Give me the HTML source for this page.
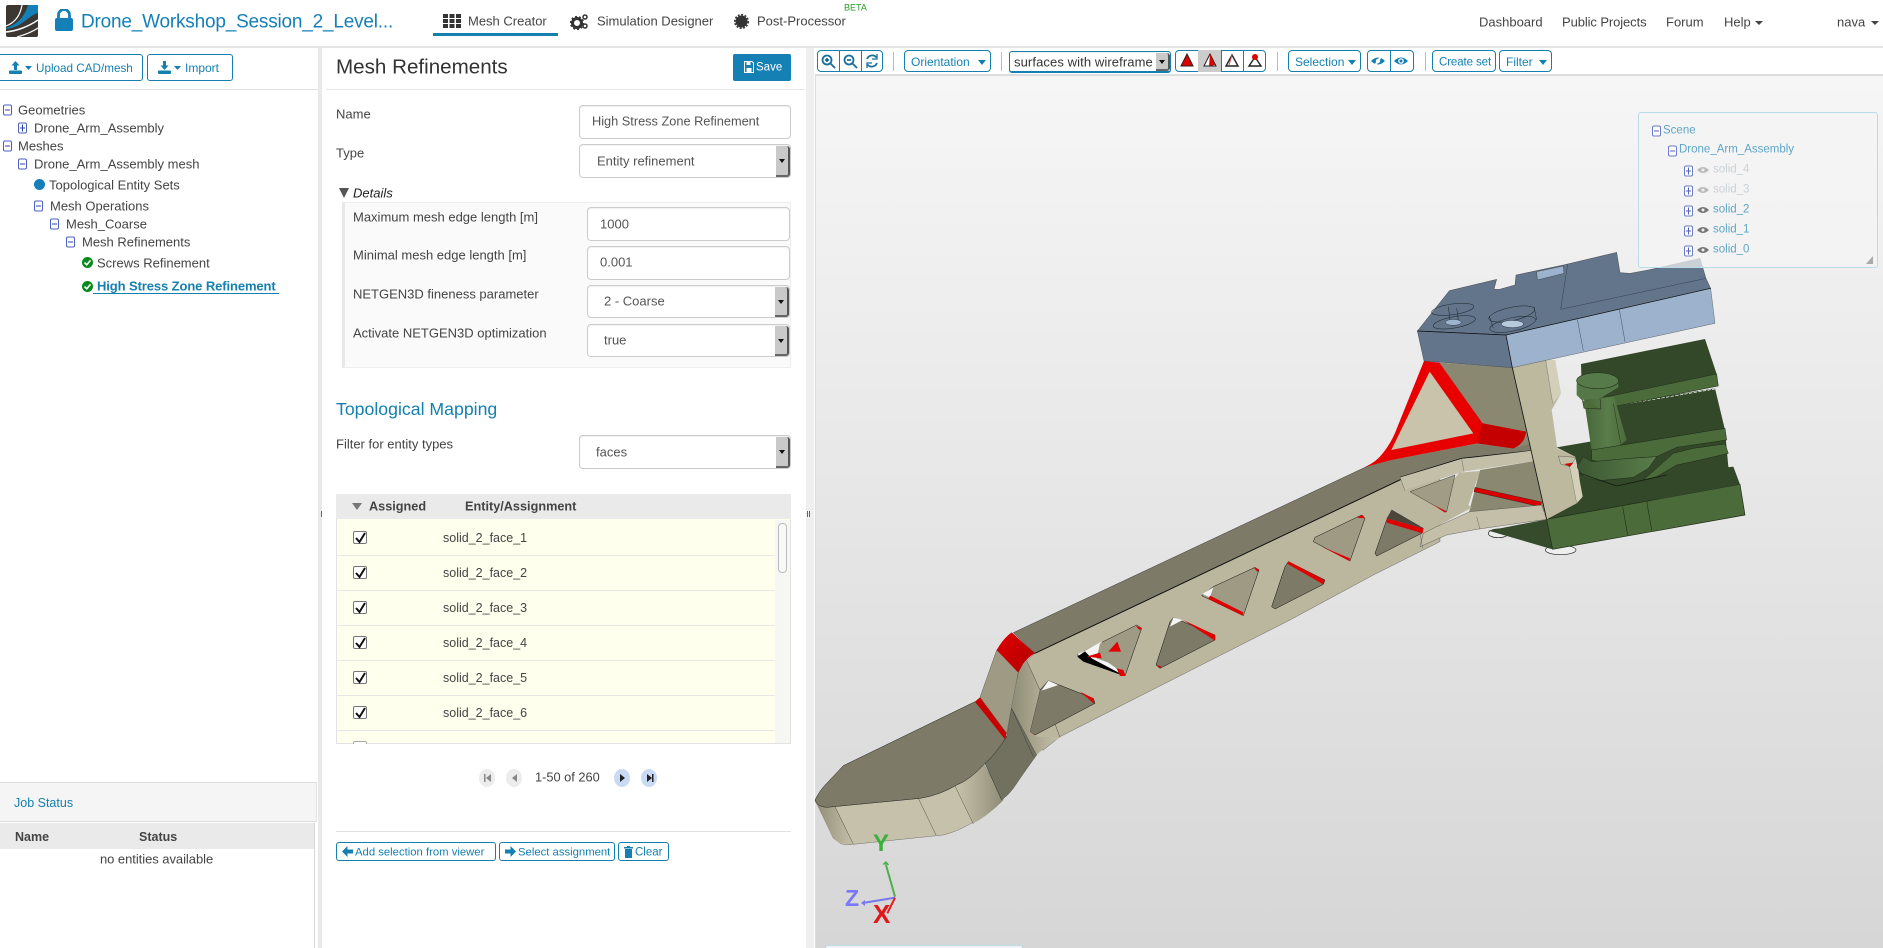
<!DOCTYPE html>
<html><head><meta charset="utf-8"><title>Mesh Creator</title>
<style>
html,body{margin:0;padding:0;width:1883px;height:948px;overflow:hidden;background:#fff;font-family:"Liberation Sans",sans-serif;color:#444;font-size:13px}
.t{position:absolute;white-space:nowrap;transform:translateY(-50%);line-height:1}
.r{position:absolute}
.b{position:absolute;box-sizing:border-box;border:1px solid #1580b0;border-radius:3px;background:#fff;color:#1580b0;font-size:12px;white-space:nowrap}
.b span{position:absolute;top:calc(50% + .5px);transform:translateY(-50%);line-height:1}
.inp{position:absolute;box-sizing:border-box;border:1px solid #ccc;border-radius:4px;background:#fff;box-shadow:inset 0 1px 1px rgba(0,0,0,.06)}
.sel:after{content:"";position:absolute;right:0;top:1px;bottom:0;width:12px;background:#c9c9c9;border-right:2px solid #555;border-bottom:2px solid #666;border-radius:0 3px 3px 0;box-sizing:content-box}
.sel:before{content:"";position:absolute;z-index:2;right:5px;top:50%;margin-top:-2px;border:3px solid transparent;border-top:4px solid #111;border-bottom:0}
.ex{position:absolute;box-sizing:border-box;width:9px;height:11px;border:1px solid #4a5fc4;border-radius:2px;background:#fff;transform:translateY(-50%)}
.ex:before{content:"";position:absolute;left:1px;right:1px;top:4px;height:1px;background:#2f3fa8}
.ex.p:after{content:"";position:absolute;top:1px;bottom:1px;left:3px;width:1px;background:#2f3fa8}
.row{position:absolute;left:337px;width:438px;background:#ffffee;border-bottom:1px solid #e6e6e6;box-sizing:border-box}
.cb{position:absolute;box-sizing:border-box;width:14px;height:13px;border:1px solid #777;border-radius:2px;background:#fff}
.pg{position:absolute;top:769px;width:16px;height:18px;border-radius:50%;background:#ececec}
.sep{position:absolute;top:52px;width:1px;height:19px;background:#bbb}
.hand{position:absolute;width:1px;height:6px;background:#666}
</style></head><body>

<!-- header -->
<div class="r" style="left:0;top:46px;width:1883px;height:2px;background:#e4e4e4"></div>
<svg class="r" style="left:6px;top:5px" width="32" height="32" viewBox="0 0 32 32">
<rect width="32" height="32" rx="2" fill="#3c3733"/>
<path d="M0 23C9 20 18 14 22 0H32V8C25 10 20 16 13 20C9 22 4 23.500 0 24Z" fill="#1580b8"/>
<path d="M0 21C8 18 14 12 16 0" stroke="#fff" stroke-width="1.200" fill="none"/>
<path d="M0 27C10 26 22 22 32 15" stroke="#fff" stroke-width="1.500" fill="none"/>
<path d="M11 32C18 30 26 27 32 23" stroke="#fff" stroke-width="1.200" fill="none"/>
</svg>
<svg class="r" style="left:55px;top:9px" width="18" height="22" viewBox="0 0 18 22"><path d="M3.500 9V6a5.500 5.500 0 0 1 11 0v3" fill="none" stroke="#1580b8" stroke-width="2.800"/><rect x="0" y="9" width="18" height="13" rx="2" fill="#1580b8"/></svg>
<div class="t" style="left:81px;top:22px;font-size:19px;color:#1580b8;letter-spacing:-.2px">Drone_Workshop_Session_2_Level...</div>

<svg class="r" style="left:443px;top:14px" width="18" height="14" viewBox="0 0 18 14" fill="#333"><rect width="5" height="4"/><rect x="6.500" width="5" height="4"/><rect x="13" width="5" height="4"/><rect y="5" width="5" height="4"/><rect x="6.500" y="5" width="5" height="4"/><rect x="13" y="5" width="5" height="4"/><rect y="10" width="5" height="4"/><rect x="6.500" y="10" width="5" height="4"/><rect x="13" y="10" width="5" height="4"/></svg>
<div class="t" style="left:468px;top:21px;font-size:13px">Mesh Creator</div>
<div class="r" style="left:433px;top:33px;width:125px;height:3px;background:#1580b0"></div>
<svg class="r" style="left:570px;top:13px" width="19" height="17" viewBox="0 0 19 17"><circle cx="7" cy="10" r="4.500" fill="none" stroke="#333" stroke-width="3"/><circle cx="7" cy="10" r="6.400" fill="none" stroke="#333" stroke-width="1.500" stroke-dasharray="2 2"/><circle cx="15" cy="4" r="2" fill="none" stroke="#333" stroke-width="1.500"/><circle cx="15" cy="13" r="2" fill="none" stroke="#333" stroke-width="1.500"/></svg>
<div class="t" style="left:597px;top:21px;font-size:13px">Simulation Designer</div>
<svg class="r" style="left:734px;top:14px" width="15" height="15" viewBox="0 0 15 15"><circle cx="7.500" cy="7.500" r="6" fill="#333"/><circle cx="7.500" cy="7.500" r="6.800" fill="none" stroke="#333" stroke-width="1.500" stroke-dasharray="2 1.500"/></svg>
<div class="t" style="left:757px;top:21px;font-size:13px">Post-Processor</div>
<div class="t" style="left:844px;top:8px;font-size:9px;color:#2a9a2a">BETA</div>
<div class="t" style="left:1479px;top:22px;font-size:13px">Dashboard</div>
<div class="t" style="left:1562px;top:22px;font-size:13px;letter-spacing:-.1px">Public Projects</div>
<div class="t" style="left:1666px;top:22px;font-size:13px">Forum</div>
<div class="t" style="left:1724px;top:22px;font-size:13px">Help</div>
<div class="r" style="left:1755px;top:21px;border:4px solid transparent;border-top:4px solid #444;border-bottom:0"></div>
<div class="t" style="left:1837px;top:22px;font-size:13px">nava</div>
<div class="r" style="left:1871px;top:21px;border:4px solid transparent;border-top:4px solid #444;border-bottom:0"></div>

<!-- splitters -->
<div class="r" style="left:318px;top:48px;width:4px;height:900px;background:#e9e9e9"></div>
<div class="r" style="left:806px;top:48px;width:8px;height:900px;background:#efefef"></div>
<div class="hand" style="left:321px;top:511px"></div>
<div class="hand" style="left:807px;top:511px"></div><div class="hand" style="left:809px;top:511px"></div>

<!-- left panel -->
<div class="b" style="left:-2px;top:54px;width:145px;height:27px"><svg style="position:absolute;left:10px;top:6px" width="13" height="13" viewBox="0 0 13 13" fill="#1580b0"><path d="M6.500 0L10.500 4.500H8V9H5V4.500H2.500Z"/><rect y="9.500" width="13" height="3.500" rx="1"/></svg><svg style="position:absolute;left:26px;top:11px" width="7" height="4" fill="#1580b0"><path d="M0 0H7L3.500 4Z"/></svg><span style="left:37px;font-size:11.700px;top:calc(50% + 1.500px)">Upload CAD/mesh</span></div>
<div class="b" style="left:147px;top:54px;width:86px;height:27px"><svg style="position:absolute;left:10px;top:6px" width="13" height="13" viewBox="0 0 13 13" fill="#1580b0"><path d="M6.500 9L10.500 4.500H8V0H5V4.500H2.500Z"/><rect y="9.500" width="13" height="3.500" rx="1"/></svg><svg style="position:absolute;left:26px;top:11px" width="7" height="4" fill="#1580b0"><path d="M0 0H7L3.500 4Z"/></svg><span style="left:37px">Import</span></div>
<div class="r" style="left:0;top:89px;width:318px;height:1px;background:#e2e2e2"></div>

<div class="ex" style="left:3px;top:110px"></div><div class="t" style="left:18px;top:110px">Geometries</div>
<div class="ex p" style="left:18px;top:128px"></div><div class="t" style="left:34px;top:128px">Drone_Arm_Assembly</div>
<div class="ex" style="left:3px;top:146px"></div><div class="t" style="left:18px;top:146px">Meshes</div>
<div class="ex" style="left:18px;top:164px"></div><div class="t" style="left:34px;top:164px">Drone_Arm_Assembly mesh</div>
<div class="r" style="left:34px;top:179px;width:11px;height:11px;border-radius:50%;background:#1580b8"></div><div class="t" style="left:49px;top:185px">Topological Entity Sets</div>
<div class="ex" style="left:34px;top:206px"></div><div class="t" style="left:50px;top:206px">Mesh Operations</div>
<div class="ex" style="left:50px;top:224px"></div><div class="t" style="left:66px;top:224px">Mesh_Coarse</div>
<div class="ex" style="left:66px;top:242px"></div><div class="t" style="left:82px;top:242px">Mesh Refinements</div>
<svg class="r" style="left:82px;top:257px" width="11" height="11" viewBox="0 0 11 11"><circle cx="5.500" cy="5.500" r="5.500" fill="#0a8a1e"/><path d="M2.500 5.500L4.700 7.800L8.500 3.400" stroke="#fff" stroke-width="1.600" fill="none"/></svg><div class="t" style="left:97px;top:263px">Screws Refinement</div>
<svg class="r" style="left:82px;top:281px" width="11" height="11" viewBox="0 0 11 11"><circle cx="5.500" cy="5.500" r="5.500" fill="#0a8a1e"/><path d="M2.500 5.500L4.700 7.800L8.500 3.400" stroke="#fff" stroke-width="1.600" fill="none"/></svg>
<div class="t" style="left:97px;top:286px;font-size:13px;font-weight:bold;color:#1580b0;letter-spacing:-.1px">High Stress Zone Refinement</div>
<div class="r" style="left:93px;top:293px;width:186px;height:1px;background:#1580b0"></div>

<!-- job status -->
<div class="r" style="left:0;top:782px;width:317px;height:40px;background:#f5f5f5;border-top:1px solid #ddd;box-sizing:border-box;border-right:1px solid #e4e4e4;border-bottom:1px solid #ddd"></div>
<div class="t" style="left:14px;top:803px;font-size:12.500px;color:#1580b0">Job Status</div>
<div class="r" style="left:0;top:823px;width:314px;height:26px;background:#eaeaea"></div>
<div class="r" style="left:314px;top:823px;width:1px;height:125px;background:#d8d8d8"></div>
<div class="t" style="left:15px;top:837px;font-weight:bold;font-size:12.500px">Name</div>
<div class="t" style="left:139px;top:837px;font-weight:bold;font-size:12.500px">Status</div>
<div class="t" style="left:100px;top:859px;font-size:13px;letter-spacing:-.05px">no entities available</div>

<!-- middle panel -->
<div class="t" style="left:336px;top:68px;font-size:20.600px;color:#333">Mesh Refinements</div>
<div class="r" style="left:733px;top:54px;width:58px;height:27px;background:#1580b4;border-radius:2px"></div>
<svg class="r" style="left:744px;top:61px" width="10" height="12" viewBox="0 0 10 12"><path d="M.5.500H8L9.500 2V11.500H.5Z" fill="none" stroke="#fff"/><rect x="2.500" y="1" width="4" height="3" fill="#fff"/><rect x="2.500" y="7" width="5" height="4" fill="#fff"/></svg>
<div class="t" style="left:756px;top:68px;color:#fff;font-size:11.500px">Save</div>
<div class="r" style="left:326px;top:89px;width:479px;height:1px;background:#e6e6e6"></div>

<div class="t" style="left:336px;top:114px">Name</div>
<div class="inp" style="left:579px;top:105px;width:212px;height:34px"></div>
<div class="t" style="left:592px;top:122px;font-size:12.800px;letter-spacing:-.02px;color:#555">High Stress Zone Refinement</div>
<div class="t" style="left:336px;top:153px">Type</div>
<div class="inp sel" style="left:579px;top:144px;width:212px;height:34px"></div>
<div class="t" style="left:597px;top:161px;font-size:13px;color:#555">Entity refinement</div>
<svg class="r" style="left:339px;top:188px" width="10" height="10"><path d="M0 0H10L5 10Z" fill="#555"/></svg>
<div class="t" style="left:353px;top:193px;font-style:italic;color:#222">Details</div>

<div class="r" style="left:342px;top:202px;width:449px;height:166px;background:#fafafa;border:1px solid #eee;border-left:3px solid #e8e8e8;box-sizing:border-box"></div>
<div class="t" style="left:353px;top:217px">Maximum mesh edge length [m]</div>
<div class="inp" style="left:587px;top:207px;width:203px;height:34px"></div>
<div class="t" style="left:600px;top:224px;color:#555">1000</div>
<div class="t" style="left:353px;top:255px">Minimal mesh edge length [m]</div>
<div class="inp" style="left:587px;top:246px;width:203px;height:34px"></div>
<div class="t" style="left:600px;top:262px;color:#555">0.001</div>
<div class="t" style="left:353px;top:294px">NETGEN3D fineness parameter</div>
<div class="inp sel" style="left:587px;top:285px;width:203px;height:33px"></div>
<div class="t" style="left:604px;top:301px;color:#555">2 - Coarse</div>
<div class="t" style="left:353px;top:333px">Activate NETGEN3D optimization</div>
<div class="inp sel" style="left:587px;top:324px;width:203px;height:33px"></div>
<div class="t" style="left:604px;top:340px;color:#555">true</div>

<div class="t" style="left:336px;top:410px;font-size:17.700px;color:#1580b0">Topological Mapping</div>
<div class="t" style="left:336px;top:444px">Filter for entity types</div>
<div class="inp sel" style="left:579px;top:435px;width:212px;height:34px"></div>
<div class="t" style="left:596px;top:452px;color:#555">faces</div>

<div class="r" style="left:336px;top:494px;width:455px;height:250px;border:1px solid #e2e2e2;box-sizing:border-box;background:#ffffee"></div>
<div class="r" style="left:336px;top:494px;width:455px;height:25px;background:#eaeaea"></div>
<svg class="r" style="left:352px;top:503px" width="10" height="7"><path d="M0 0H10L5 7Z" fill="#777"/></svg>
<div class="t" style="left:369px;top:507px;font-weight:bold;font-size:12.700px">Assigned</div>
<div class="t" style="left:465px;top:507px;font-weight:bold;font-size:12.700px">Entity/Assignment</div>

<div class="row" style="top:521px;height:35px"></div>
<div class="row" style="top:556px;height:35px"></div>
<div class="row" style="top:591px;height:35px"></div>
<div class="row" style="top:626px;height:35px"></div>
<div class="row" style="top:661px;height:35px"></div>
<div class="row" style="top:696px;height:35px"></div>
<div class="row" style="top:731px;height:12px;border-bottom:0"></div>
<div class="r" style="left:775px;top:520px;width:15px;height:223px;background:#f6f6f2"></div>
<div class="r" style="left:778px;top:523px;width:9px;height:50px;border:1px solid #bbb;border-radius:4px;box-sizing:border-box;background:#f8f8f8"></div>

<div class="cb" style="left:353px;top:531px"></div><div class="t" style="left:443px;top:538px;font-size:12.500px">solid_2_face_1</div>
<div class="cb" style="left:353px;top:566px"></div><div class="t" style="left:443px;top:573px;font-size:12.500px">solid_2_face_2</div>
<div class="cb" style="left:353px;top:601px"></div><div class="t" style="left:443px;top:608px;font-size:12.500px">solid_2_face_3</div>
<div class="cb" style="left:353px;top:636px"></div><div class="t" style="left:443px;top:643px;font-size:12.500px">solid_2_face_4</div>
<div class="cb" style="left:353px;top:671px"></div><div class="t" style="left:443px;top:678px;font-size:12.500px">solid_2_face_5</div>
<div class="cb" style="left:353px;top:706px"></div><div class="t" style="left:443px;top:713px;font-size:12.500px">solid_2_face_6</div>
<svg class="r" style="left:354px;top:529px" width="14" height="190" fill="none" stroke="#111" stroke-width="2"><path d="M2 9L5.500 13L11 4"/><path d="M2 44L5.500 48L11 39"/><path d="M2 79L5.500 83L11 74"/><path d="M2 114L5.500 118L11 109"/><path d="M2 149L5.500 153L11 144"/><path d="M2 184L5.500 188L11 179"/></svg>
<div class="r" style="left:353px;top:741px;width:14px;height:3px;border:1px solid #aaa;border-bottom:0;box-sizing:border-box;border-radius:2px 2px 0 0;background:#fff"></div>

<div class="pg" style="left:479px"></div><div class="pg" style="left:506px"></div><div class="pg" style="left:614px;background:#c9daf5"></div><div class="pg" style="left:641px;background:#c9daf5"></div>
<svg class="r" style="left:479px;top:769px" width="180" height="18" fill="#888"><path d="M5 5H6.500V13H5ZM12 5V13L7 9Z"/><path d="M38 5V13L33 9Z"/><path d="M141 5L146 9L141 13Z" fill="#222"/><path d="M168 5L173 9L168 13Z M173 5H174.500V13H173Z" fill="#222"/></svg>
<div class="t" style="left:535px;top:778px;font-size:12.800px">1-50 of 260</div>

<div class="r" style="left:336px;top:831px;width:455px;height:1px;background:#e2e2e2"></div>
<div class="b" style="left:336px;top:842px;width:160px;height:19px"><svg style="position:absolute;left:5px;top:3px" width="11" height="11" viewBox="0 0 11 11" fill="#1580b0"><path d="M0 5.500L5.500 0V3.500H11V7.500H5.500V11Z"/></svg><span style="left:18px;font-size:11.300px;top:calc(50% + 1px)">Add selection from viewer</span></div>
<div class="b" style="left:499px;top:842px;width:116px;height:19px"><svg style="position:absolute;left:5px;top:3px" width="11" height="11" viewBox="0 0 11 11" fill="#1580b0"><path d="M11 5.500L5.500 0V3.500H0V7.500H5.500V11Z"/></svg><span style="left:18px;font-size:11.300px;top:calc(50% + 1px)">Select assignment</span></div>
<div class="b" style="left:618px;top:842px;width:51px;height:19px"><svg style="position:absolute;left:5px;top:3px" width="9" height="12" viewBox="0 0 9 12" fill="#1580b0"><rect y="1" width="9" height="1.500"/><rect x="3" width="3" height="1.500"/><path d="M1 3H8V12H1Z"/></svg><span style="left:16px;font-size:11.500px;top:calc(50% + 1px)">Clear</span></div>

<!-- viewer -->
<div class="r" style="left:815px;top:74px;width:1068px;height:874px;background:linear-gradient(#f6f6f6,#d6d6d6);border-left:1px solid #ddd;border-top:2px solid #ddd;box-sizing:border-box"></div>

<svg class="r" style="left:0;top:0" width="1883" height="948" stroke-linejoin="round">
<defs>
<linearGradient id="cyl" x1="0" x2="1" y1="0" y2="0"><stop offset="0" stop-color="#466539"/><stop offset=".55" stop-color="#5a7d4a"/><stop offset="1" stop-color="#4c6b3b"/></linearGradient>
<linearGradient id="sw" x1="0" x2="1" y1="0" y2="0"><stop offset="0" stop-color="#3c5733"/><stop offset="1" stop-color="#5a7d4a"/></linearGradient>
<linearGradient id="rd" x1="0" x2="1" y1="0" y2="1"><stop offset="0" stop-color="#e00000"/><stop offset="1" stop-color="#b00000"/></linearGradient>
<linearGradient id="sh" x1="0" x2="1" y1="0" y2="0"><stop offset="0" stop-color="#8f8c76"/><stop offset=".5" stop-color="#aaa690"/><stop offset="1" stop-color="#c6c1aa"/></linearGradient>
<linearGradient id="sh2" x1="0" x2="1" y1="0" y2="0"><stop offset="0" stop-color="#c6c1aa"/><stop offset=".55" stop-color="#aaa690"/><stop offset="1" stop-color="#8f8c76"/></linearGradient>
</defs>
<!-- GREEN -->
<g transform="translate(1400,240) scale(.33333)" stroke="none">
<ellipse cx="295" cy="880" rx="30" ry="13" fill="#eee" stroke="#222" stroke-width="2"/>
<ellipse cx="482" cy="930" rx="46" ry="14" fill="#eee" stroke="#222" stroke-width="2"/>
<polygon points="470,622 570,605 640,600 975,570 985,680 1020,733 440,838 545,770 535,690 525,650" fill="#334729"/>
<polygon points="265,872 440,838 458,928" fill="#364a2c"/>
<polygon points="440,838 1020,733 1035,825 458,928" fill="#4c6b3b" stroke="#1c2a16" stroke-width="2"/>
<path d="M668 800L683 885M740 783L755 870" stroke="#22331a" stroke-width="2"/>
<polygon points="543,372 915,297 950,402 600,475 545,440" fill="#334729"/>
<polygon points="620,497 945,445 975,570 640,625" fill="#334729"/>
<path d="M660 495L945 447" stroke="#fff" stroke-width="2" stroke-dasharray="10 4"/>
<polygon points="600,475 950,402 955,438 603,507" fill="#4c6b3b" stroke="#1c2a16" stroke-width="1.500"/>
<polygon points="552,478 642,470 680,600 645,625 575,632" fill="url(#cyl)"/>
<path d="M640 490L662 610" stroke="#22331a" stroke-width="1.500"/>
<polygon points="530,430 530,465 545,480 600,475 655,442 655,420" fill="#557848"/>
<path d="M600 475L603 507M547 480L552 505L603 507" stroke="#1c2a16" stroke-width="1.500" fill="#4c6b3b"/>
<ellipse cx="593" cy="422" rx="63" ry="24" fill="#567a49" stroke="#22331a" stroke-width="2"/>
<polygon points="575,630 975,565 980,600 830,622 770,650 690,655 610,668 575,660" fill="#4c6b3b" stroke="#1c2a16" stroke-width="1.500"/>
<polygon points="530,680 550,650 575,665 690,655 770,650 745,685 700,712 600,722 550,710" fill="url(#sw)" stroke="#1c2a16" stroke-width="1.500"/>
<polygon points="730,720 820,640 880,625 975,612 985,640 900,660 830,675 770,710" fill="#4c6b3b" stroke="#1c2a16" stroke-width="1.500"/>
<polygon points="540,705 650,738 800,705 1000,680 1020,733 800,773 545,815" fill="#334729"/>
<path d="M540 700L650 738L800 705" stroke="#111a0c" stroke-width="2" fill="none"/>
</g>

<!-- BEAM BODY z7 -->
<g transform="translate(960,450) scale(.33333)">
<polygon points="160,548 1215,52 1330,5 1440,-25 1440,40 1330,85 225,610" fill="#7e7a68" stroke="#222" stroke-width="1.200"/>
<polygon points="225,610 1330,85 1440,40 1440,275 1240,375 990,510 300,860 250,900 200,900 160,780 175,665 200,632" fill="#bbb79f" stroke="#333" stroke-width="1"/>
<path d="M225 610L1330 85L1440 40" stroke="#111" stroke-width="3" fill="none"/>
<g stroke="#111" stroke-width="1.500">
<polygon points="265,692 400,745 405,760 225,855 210,845 240,720" fill="#7e7a68"/>
<polygon points="530,525 545,535 495,678 375,632 352,615 375,602" fill="#9e9a84"/>
<polygon points="640,503 765,555 765,570 600,655 588,645 630,515" fill="#7e7a68"/>
<polygon points="885,352 897,360 850,497 725,437 760,410" fill="#9e9a84"/>
<polygon points="985,335 1095,390 1090,403 945,477 935,470 975,350" fill="#7e7a68"/>
<polygon points="1205,195 1215,205 1170,333 1060,275 1065,262" fill="#9e9a84"/>
<polygon points="1295,180 1390,235 1385,250 1250,318 1245,310 1280,210" fill="#7e7a68"/>
</g>
<g stroke="none">
<polygon points="245,722 265,692 295,705" fill="#f4f4f4"/>
<polygon points="360,725 400,745 403,762" fill="#e00000"/>
<polygon points="210,845 225,855 218,860" fill="#e00000"/>
<polygon points="630,530 640,503 668,510" fill="#f4f4f4"/>
<polygon points="670,510 765,555 765,572" fill="#e00000"/>
<polygon points="727,432 760,412 750,442" fill="#f4f4f4"/>
<polygon points="750,437 850,487 848,497 745,447" fill="#e00000"/>
<polygon points="980,340 988,335 1093,390 1090,403" fill="#e00000"/>
<polygon points="1085,290 1170,325 1168,333" fill="#e00000"/>
<polygon points="1190,203 1208,195 1215,205" fill="#e00000"/>
<polygon points="880,352 897,358 893,366" fill="#e00000"/>
<polygon points="527,528 545,533 540,541" fill="#e00000"/>
<polygon points="353,612 375,602 425,575 420,620 465,652 490,678 470,665 375,632" fill="#f4f4f4"/>
<polygon points="352,620 375,604 395,625 495,678 470,670 370,635" fill="#000"/>
<polygon points="420,580 470,575 480,630 465,645 410,625" fill="#9e9a84"/>
<polygon points="445,605 472,575 483,605" fill="#e00000"/>
<polygon points="380,620 420,608 425,625" fill="#e00000"/>
<polygon points="470,655 490,660 497,678 480,678" fill="#e00000"/>
<polygon points="1280,205 1390,235 1388,250 1280,218" fill="#e00000"/>
<polygon points="1295,180 1390,235 1280,205" fill="#4a463c"/>
<polygon points="590,645 600,655 605,650" fill="#e00000"/>
</g>
</g>

<!-- TIP z5 -->
<g transform="translate(810,600) scale(.33333)">
<path d="M625 218L650 182L690 270L660 395L680 410L750 412Q715 430 680 465L605 325Z" fill="url(#sh)"/>
<path d="M15 600Q20 620 50 622L330 595Q390 585 440 555Q480 540 520 490L580 600Q530 650 480 672Q440 695 400 705L130 733Q95 738 85 725L70 715Z" fill="#c6c1aa" stroke="#444" stroke-width="1"/>
<path d="M438 556Q480 540 520 490L578 602Q530 650 490 670Z" fill="url(#sh2)"/>
<path d="M15 600L70 715L85 727L130 733L75 620L50 622Z" fill="url(#sh)"/>
<path d="M525 490L590 410L605 325L680 465Q640 520 610 565Q595 585 575 600Z" fill="#72705f" stroke="#333" stroke-width="1"/>
<path d="M15 600Q30 570 50 550L100 497L495 305L590 410Q555 465 525 490Q480 540 440 555Q390 585 330 595L50 622Q20 620 15 600Z" fill="#7e7a68" stroke="#222" stroke-width="1.500"/>
<polygon points="510,292 560,150 625,215 605,320 590,400" fill="#9e9a84" stroke="#333" stroke-width="1"/>
<polygon points="495,305 510,292 590,400 585,418" fill="#c80000"/>
<path d="M560 150Q580 115 605 97L675 160Q645 175 625 218Z" fill="url(#rd)"/>
<path d="M75 620L130 733M325 595L378 705M435 558L490 672M525 490L575 600M605 325L670 470M650 182L690 270M735 372L750 412" stroke="#333" stroke-width="1.200" fill="none"/>
</g>

<!-- COLUMN / HEAD z11 -->
<g transform="translate(1400,240) scale(.33333)">
<polygon points="118,368 337,383 395,640 180,655 0,712 -26,660" fill="#8b8872"/>
<polygon points="-26,660 232,612 340,625 395,610 405,645 185,655 0,712 -105,730 -105,685" fill="#7e7a68"/>
<path d="M72 363L118 368L248 550L378 575Q375 610 340 625L232 610L-26 660L-105 681Q-70 665 -51 639Q-28 610 -15 579Z" fill="#e80000"/>
<path d="M248 550L378 575Q375 610 340 625L232 610Z" fill="#c40000"/>
<polygon points="89,395 220,580 -26,630" fill="#c8c3aa"/>
<path d="M0 712L185 655L395 632" stroke="#111" stroke-width="2.500" fill="none"/>
<polygon points="240,690 410,662 440,815 205,825" fill="#8b8872"/>
<polygon points="225,742 425,786 420,800 222,755" fill="#d80000" stroke="#111" stroke-width="1"/>
<polygon points="15,750 190,695 410,662 395,632 185,657 0,712" fill="#c4bfa8"/>
<path d="M0 712L15 752M185 657L192 695" stroke="#444" stroke-width="1"/>
<polygon points="178,698 240,693 205,795 215,803 110,860 60,860 100,795" fill="#bbb79f"/>
<polygon points="30,755 165,705 140,815 100,795" fill="#a09c85" stroke="#222" stroke-width="1.200"/>
<polygon points="100,795 140,815 135,818" fill="#e00000"/>
<polygon points="60,920 140,885 230,868 440,838 425,795 210,815 110,860 70,880" fill="#c4bfa8" stroke="#333" stroke-width="1"/>
<path d="M60 880L68 925M230 830L240 868" stroke="#444" stroke-width="1"/>
<polygon points="337,383 437,360 465,360 483,460 455,510 472,625 525,650 548,770 530,790 440,838" fill="#bdb99f"/>
<polygon points="437,360 465,360 483,460 458,490" fill="#d4cfb8"/>
<polygon points="505,660 525,650 548,770 530,790" fill="#d4cfb8"/>
<path d="M437 360L458 490M505 660L530 790" stroke="#555" stroke-width="1"/>
<path d="M337 383L440 838" stroke="#111" stroke-width="2.500"/>
<polygon points="475,648 528,652 510,680 482,672" fill="#c4bfa8" stroke="#333" stroke-width="1"/>
<polygon points="492,672 520,668 510,680" fill="#d00000"/>
<polygon points="52,273 148,152 290,118 282,148 298,148 345,135 348,105 490,75 650,37 660,98 690,100 745,90 900,55 918,115 932,145 318,285" fill="#62758a" stroke="#222" stroke-width="1"/>
<polygon points="318,285 932,145 945,250 337,383" fill="#9db3cd" stroke="#333" stroke-width="1"/>
<polygon points="52,273 318,285 337,383 72,363" fill="#62758a" stroke="#222" stroke-width="1"/>
<path d="M318 285L932 145M52 273L318 285M318 285L337 383" stroke="#111" stroke-width="2" fill="none"/>
<path d="M532 238L550 332M658 208L675 305M482 208L503 72M482 208L918 115" stroke="#2a3542" stroke-width="1.200" fill="none"/>
<polygon points="410,95 490,78 492,100 412,120" fill="#9db3cd" stroke="#222" stroke-width="1"/>
<g fill="none" stroke="#1a222b" stroke-width="1.500">
<ellipse cx="158" cy="208" rx="64" ry="16" transform="rotate(-8 158 208)"/>
<ellipse cx="163" cy="247" rx="64" ry="17" transform="rotate(-10 163 247)"/>
<ellipse cx="335" cy="222" rx="70" ry="20" transform="rotate(-12 335 222)"/>
<ellipse cx="338" cy="253" rx="70" ry="20" transform="rotate(-12 338 253)"/>
<path d="M268 228L280 265M402 200L410 240M145 200L150 240M170 205L175 240"/>
</g>
<ellipse cx="160" cy="247" rx="24" ry="9" fill="#9db3cd" stroke="#1a222b" stroke-width="1.200"/>
<ellipse cx="337" cy="252" rx="33" ry="11" fill="#b8cbdd" stroke="#1a222b" stroke-width="1.200"/>
</g>

<!-- axes -->
<g transform="translate(810,600) scale(.33333)" fill="none">
<path d="M255 890L228 795" stroke="#4caf4c" stroke-width="6"/><path d="M217 793L228 783L238 795Z" fill="#4caf4c"/>
<path d="M255 893L165 908" stroke="#7777ee" stroke-width="6"/><path d="M165 900L153 909L165 918Z" fill="#7777ee"/>
<path d="M255 893L232 940" stroke="#e02020" stroke-width="6"/>
</g>
<text x="873" y="851" font-family="Liberation Sans" font-size="24" font-weight="bold" fill="#3cb03c">Y</text>
<text x="845" y="906" font-family="Liberation Sans" font-size="23" font-weight="bold" fill="#7777ff">Z</text>
<text x="873" y="923" font-family="Liberation Sans" font-size="26" font-weight="bold" fill="#e01818">X</text>
</svg>

<!-- bottom tab in viewer -->
<div class="r" style="left:825px;top:945px;width:198px;height:3px;background:#eef3f5;border:1px solid #bcdde8;border-bottom:0;border-radius:3px 3px 0 0;box-sizing:border-box"></div>

<!-- viewer toolbar -->
<div class="b" style="left:817px;top:50px;width:66px;height:22px;border-radius:4px"></div>
<div class="r" style="left:839px;top:50px;width:1px;height:22px;background:#1580b0"></div>
<div class="r" style="left:861px;top:50px;width:1px;height:22px;background:#1580b0"></div>
<svg class="r" style="left:817px;top:50px" width="66" height="22" fill="none" stroke="#1a6f9a" stroke-width="1.800"><circle cx="10" cy="10" r="4.500"/><path d="M13.500 13.500L18 18M8 10H12M10 8V12"/><circle cx="32" cy="10" r="4.500"/><path d="M35.500 13.500L40 18M30 10H34"/><path d="M50 9A5.500 5.500 0 0 1 59.500 7.500M60 13A5.500 5.500 0 0 1 50.500 14.500"/><path d="M60 4V9H55M50 18V13H55" stroke-width="1.300"/></svg>
<div class="sep" style="left:893px"></div>
<div class="b" style="left:904px;top:50px;width:87px;height:22px;border-radius:4px"><span style="left:6px;font-size:12px">Orientation</span><svg style="position:absolute;left:73px;top:9px" width="8" height="5" fill="#1580b0"><path d="M0 0H8L4 5Z"/></svg></div>
<div class="sep" style="left:1001px"></div>
<div class="inp sel" style="left:1009px;top:51px;width:162px;height:22px;border:1px solid #1580b0;border-bottom:2px solid #1580b0;border-radius:3px"></div>
<div class="t" style="left:1014px;top:62px;font-size:13px;letter-spacing:.1px;color:#333">surfaces with wireframe</div>
<div class="b" style="left:1175px;top:50px;width:91px;height:22px;border-radius:4px"></div>
<div class="r" style="left:1198px;top:50px;width:23px;height:22px;background:#ccc"></div>
<div class="r" style="left:1221px;top:50px;width:1px;height:22px;background:#1580b0"></div>
<div class="r" style="left:1243px;top:50px;width:1px;height:22px;background:#1580b0"></div>
<svg class="r" style="left:1175px;top:50px" width="91" height="22">
<path d="M12 4L18 16L6 16Z" fill="#e00000" stroke="#222"/>
<path d="M35 4L41 16L29 16Z" fill="#fff" stroke="#222"/><path d="M35 4L40 15L34 16Z" fill="#e00000"/>
<path d="M57 5L63 16L51 16Z" fill="none" stroke="#222" stroke-width="1.400"/><path d="M57 5L54 15" stroke="#d05050"/>
<path d="M80 7L86 16L74 16Z" fill="none" stroke="#222" stroke-width="1.400"/><circle cx="80" cy="7" r="3" fill="#e00000"/>
</svg>
<div class="sep" style="left:1277px"></div>
<div class="b" style="left:1288px;top:50px;width:73px;height:22px;border-radius:4px"><span style="left:6px;font-size:12px">Selection</span><svg style="position:absolute;left:59px;top:9px" width="8" height="5" fill="#1580b0"><path d="M0 0H8L4 5Z"/></svg></div>
<div class="b" style="left:1367px;top:50px;width:47px;height:22px;border-radius:4px"></div>
<div class="r" style="left:1390px;top:50px;width:1px;height:22px;background:#1580b0"></div>
<svg class="r" style="left:1367px;top:50px" width="47" height="22"><path d="M4 11Q11 4 18 11Q11 18 4 11Z" fill="#1580b0"/><circle cx="11" cy="11" r="2.200" fill="#fff"/><path d="M7 17L15 5" stroke="#fff" stroke-width="2"/><path d="M27 11Q34 4 41 11Q34 18 27 11Z" fill="#1580b0"/><circle cx="34" cy="11" r="2.800" fill="#fff"/><circle cx="34" cy="11" r="1.500" fill="#1580b0"/></svg>
<div class="sep" style="left:1425px"></div>
<div class="b" style="left:1432px;top:50px;width:64px;height:22px;border-radius:4px"><span style="left:6px;font-size:11.500px;letter-spacing:-.1px;top:calc(50% + 1.500px)">Create set</span></div>
<div class="b" style="left:1499px;top:50px;width:53px;height:22px;border-radius:4px"><span style="left:6px;font-size:12px">Filter</span><svg style="position:absolute;left:39px;top:9px" width="8" height="5" fill="#1580b0"><path d="M0 0H8L4 5Z"/></svg></div>

<!-- scene panel -->
<div class="r" style="left:1638px;top:112px;width:240px;height:156px;box-sizing:border-box;border:1px solid #b7dde9;border-radius:3px;background:rgba(244,244,244,.72)"></div>
<div class="ex" style="left:1652px;top:131px;opacity:.8"></div><div class="t" style="left:1663px;top:131px;font-size:11.500px;color:#5ea6c6">Scene</div>
<div class="ex" style="left:1668px;top:151px;opacity:.8"></div><div class="t" style="left:1679px;top:150px;font-size:11.500px;color:#5ea6c6">Drone_Arm_Assembly</div>
<div class="ex p" style="left:1684px;top:171px;opacity:.8"></div><div class="t" style="left:1713px;top:170px;font-size:11.500px;color:#c9d2d6">solid_4</div>
<div class="ex p" style="left:1684px;top:191px;opacity:.8"></div><div class="t" style="left:1713px;top:190px;font-size:11.500px;color:#c9d2d6">solid_3</div>
<div class="ex p" style="left:1684px;top:211px;opacity:.8"></div><div class="t" style="left:1713px;top:210px;font-size:11.500px;color:#5ea6c6">solid_2</div>
<div class="ex p" style="left:1684px;top:231px;opacity:.8"></div><div class="t" style="left:1713px;top:230px;font-size:11.500px;color:#5ea6c6">solid_1</div>
<div class="ex p" style="left:1684px;top:251px;opacity:.8"></div><div class="t" style="left:1713px;top:250px;font-size:11.500px;color:#5ea6c6">solid_0</div>
<svg class="r" style="left:1697px;top:160px" width="12" height="100"><g fill="#bbb"><path d="M0 10Q6 4 12 10Q6 16 0 10Z"/><path d="M0 30Q6 24 12 30Q6 36 0 30Z"/></g><g fill="#777"><path d="M0 50Q6 44 12 50Q6 56 0 50Z"/><path d="M0 70Q6 64 12 70Q6 76 0 70Z"/><path d="M0 90Q6 84 12 90Q6 96 0 90Z"/></g><g fill="#eee"><circle cx="6" cy="10" r="1.500"/><circle cx="6" cy="30" r="1.500"/><circle cx="6" cy="50" r="1.500"/><circle cx="6" cy="70" r="1.500"/><circle cx="6" cy="90" r="1.500"/></g></svg>
<svg class="r" style="left:1866px;top:256px" width="8" height="8"><path d="M7 0V8H0Z" fill="#aaa"/></svg>
</body></html>
